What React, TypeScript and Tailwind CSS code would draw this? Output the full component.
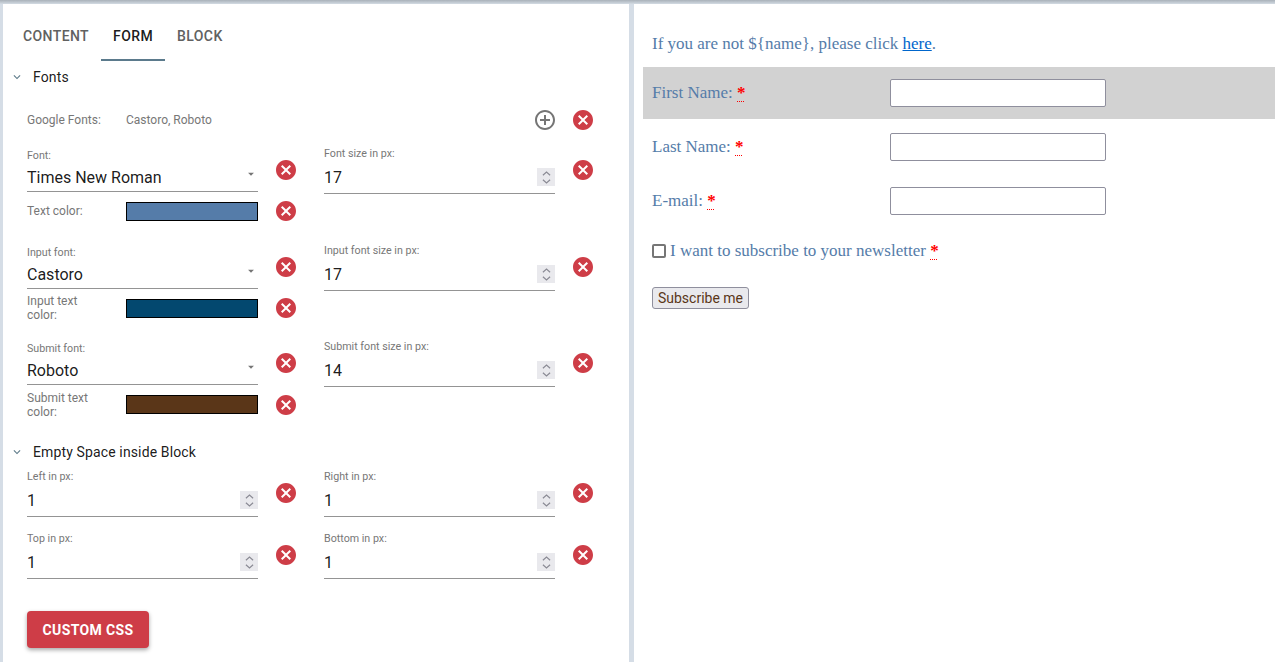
import type { ReactNode } from "react";

const ROBOTO = "font-['Roboto',sans-serif]";

function ClearIcon() {
  return (
    <svg viewBox="2 2 20 20" className="h-5 w-5 shrink-0 fill-[#ce3d47]">
      <path d="M12 2C6.47 2 2 6.47 2 12s4.47 10 10 10 10-4.47 10-10S17.53 2 12 2zm5 13.59L15.59 17 12 13.41 8.41 17 7 15.59 10.59 12 7 8.41 8.41 7 12 10.59 15.59 7 17 8.41 13.41 12 17 15.59z" />
    </svg>
  );
}

function AddIcon() {
  return (
    <svg viewBox="2 2 20 20" className="h-5 w-5 shrink-0 fill-[#757575]">
      <path d="M13 7h-2v4H7v2h4v4h2v-4h4v-2h-4V7zm-1-5C6.48 2 2 6.48 2 12s4.48 10 10 10 10-4.48 10-10S17.52 2 12 2zm0 18c-4.41 0-8-3.59-8-8s3.59-8 8-8 8 3.59 8 8-3.59 8-8 8z" />
    </svg>
  );
}

function Section({ title, className }: { title: string; className: string }) {
  return (
    <div className={`flex h-5 items-center text-sm tracking-[0.13px] text-black/90 ${className}`}>
      <svg viewBox="0 0 24 24" className="ml-[7px] h-[14px] w-[14px] fill-[#607d8b]">
        <path d="M16.59 8.59 12 13.17 7.41 8.59 6 10l6 6 6-6z" />
      </svg>
      <span className="ml-[9px]">{title}</span>
    </div>
  );
}

function SelectField({ label, value }: { label: string; value: string }) {
  return (
    <div className="mt-[2px] h-[44px] w-[231px] border-b border-[#949494]">
      <div className="h-[14px] pt-[1px] text-[10.7px] leading-[14px] text-[#777]">{label}</div>
      <div className="flex h-[29px] items-center justify-between pt-[2px] text-base text-black/90">
        <span>{value}</span>
        <svg viewBox="0 0 24 24" className="mb-[8px] h-[14px] w-[14px] fill-[#757575]">
          <path d="M7 10l5 5 5-5z" />
        </svg>
      </div>
    </div>
  );
}

function NumberField({ label, value }: { label: string; value: string }) {
  return (
    <div className="h-[48px] w-[231px] border-b border-[#949494]">
      <div className="h-[14px] pt-[1px] text-[10.7px] leading-[14px] text-[#777]">{label}</div>
      <div className="flex h-[33px] items-center justify-between pt-[1px] text-base text-black/90">
        <span className="pt-[2px]">{value}</span>
        <div className="flex h-[18px] w-[18px] flex-col items-center justify-center bg-[#e9e9ed]">
          <svg viewBox="0 0 10 5" className="h-[5px] w-[9px] fill-none stroke-[#8a8a94] stroke-[1.3]">
            <path d="M1 4.5 5 1l4 3.5" />
          </svg>
          <svg viewBox="0 0 10 5" className="mt-[3px] h-[5px] w-[9px] fill-none stroke-[#8a8a94] stroke-[1.3]">
            <path d="M1 .5 5 4l4-3.5" />
          </svg>
        </div>
      </div>
    </div>
  );
}

function Cleared({ children }: { children: ReactNode }) {
  return (
    <div className="flex items-start">
      {children}
      <div className="ml-[18px] mt-[14px]">
        <ClearIcon />
      </div>
    </div>
  );
}

function FontGroup(props: {
  fontLabel: string;
  font: string;
  sizeLabel: string;
  size: string;
  colorLabel: ReactNode;
  color: string;
  className: string;
  colorGap: string;
}) {
  return (
    <div className={props.className}>
      <div className="flex items-start gap-[28px]">
        <Cleared>
          <SelectField label={props.fontLabel} value={props.font} />
        </Cleared>
        <Cleared>
          <NumberField label={props.sizeLabel} value={props.size} />
        </Cleared>
      </div>
      <div className={`flex h-5 items-center ${props.colorGap}`}>
        <div className="w-[99px] text-xs leading-[14px] text-[#777]">{props.colorLabel}</div>
        <div className={`h-[19px] w-[132px] border border-black ${props.color}`} />
        <div className="ml-[18px]">
          <ClearIcon />
        </div>
      </div>
    </div>
  );
}

function Required() {
  return (
    <abbr title="required" className="font-bold text-[#f00] underline decoration-[#f00] decoration-dotted decoration-1 underline-offset-[3px]">
      *
    </abbr>
  );
}

function FormRow({ label, shaded }: { label: string; shaded?: boolean }) {
  return (
    <div className={`mb-[2px] flex h-[52px] items-center pl-[9px] ${shaded ? "bg-[#d2d2d2]" : ""}`}>
      <label className="w-[238px]">
        {label} <Required />
      </label>
      <input type="text" className="h-[28px] w-[216px] rounded-[2px] border border-[#8f8f9d] bg-white" />
    </div>
  );
}

export default function App() {
  return (
    <div className={`h-[662px] overflow-hidden bg-white ${ROBOTO}`}>
      <div className="h-[4px] bg-gradient-to-b from-[#a9b1b9] to-[#d3dbe3]" />
      <div className="flex h-[658px]">
        <aside className="h-full w-[634px] shrink-0 border-l-[3px] border-r-[5px] border-[#d5dde6] pt-[9px]">
          <div className="flex pl-[8px]">
            {["CONTENT", "FORM", "BLOCK"].map((tab) => (
              <div
                key={tab}
                className={`flex h-[48px] items-center border-b-2 px-[12px] text-sm font-medium tracking-[0.4px] ${
                  tab === "FORM" ? "border-[#5b7a8c] text-black/90" : "border-transparent text-[#616161]"
                }`}
              >
                {tab}
              </div>
            ))}
          </div>

          <Section title="Fonts" className="mt-[6px]" />

          <div className="pl-[24px]">
            <div className="mt-[23px] flex h-5 items-center text-xs text-[#777]">
              <span className="w-[99px]">Google Fonts:</span>
              <span className="w-[409px]">Castoro, Roboto</span>
              <AddIcon />
              <div className="ml-[18px]">
                <ClearIcon />
              </div>
            </div>

            <FontGroup
              className="mt-[16px]"
              fontLabel="Font:"
              font="Times New Roman"
              sizeLabel="Font size in px:"
              size="17"
              colorLabel="Text color:"
              color="mt-[1px] bg-[#557ca9]"
              colorGap="mt-[7px]"
            />
            <FontGroup
              className="mt-[22px]"
              fontLabel="Input font:"
              font="Castoro"
              sizeLabel="Input font size in px:"
              size="17"
              colorLabel={<>Input text<br />color:</>}
              color="mt-[1px] bg-[#03486f]"
              colorGap="mt-[7px]"
            />
            <FontGroup
              className="mt-[21px]"
              fontLabel="Submit font:"
              font="Roboto"
              sizeLabel="Submit font size in px:"
              size="14"
              colorLabel={<>Submit text<br />color:</>}
              color="mb-[1px] bg-[#5a3618]"
              colorGap="mt-[8px]"
            />
          </div>

          <Section title="Empty Space inside Block" className="mt-[27px]" />

          <div className="pl-[24px]">
            <div className="mt-[7px] flex items-start gap-[28px]">
              <Cleared>
                <NumberField label="Left in px:" value="1" />
              </Cleared>
              <Cleared>
                <NumberField label="Right in px:" value="1" />
              </Cleared>
            </div>
            <div className="mt-[14px] flex items-start gap-[28px]">
              <Cleared>
                <NumberField label="Top in px:" value="1" />
              </Cleared>
              <Cleared>
                <NumberField label="Bottom in px:" value="1" />
              </Cleared>
            </div>
            <button className="mt-[32px] h-[37px] w-[122px] rounded bg-[#ce3d47] text-sm font-bold tracking-[0.35px] text-white shadow-[0_2px_4px_rgba(0,0,0,0.35)]">
              CUSTOM CSS
            </button>
          </div>
        </aside>

        <main className="flex-1 pl-[9px] pt-[29px] font-['Liberation_Serif',serif] text-[17px] leading-[22px] text-[#557ca9]">
          <p className="pl-[9px]">
            If you are not ${"{"}name{"}"}, please click{" "}
            <a href="#here" className="text-[#0066cc] underline">here</a>.
          </p>
          <div className="mt-[12px]">
            <FormRow label="First Name:" shaded />
            <FormRow label="Last Name:" />
            <FormRow label="E-mail:" />
          </div>
          <div className="mt-[2px] flex h-[44px] items-center pl-[9px]">
            <input type="checkbox" className="m-0 h-[14px] w-[14px] appearance-none rounded-[2px] border-2 border-[#767676] bg-white" />
            <span className="ml-[4px]">
              I want to subscribe to your newsletter <Required />
            </span>
          </div>
          <div className="mt-[14px] pl-[9px]">
            <button className={`h-[22px] w-[97px] rounded-[3px] border border-[#8f8f9d] bg-[#e9e9ed] text-sm text-[#5a3618] ${ROBOTO}`}>
              Subscribe me
            </button>
          </div>
        </main>
      </div>
    </div>
  );
}
